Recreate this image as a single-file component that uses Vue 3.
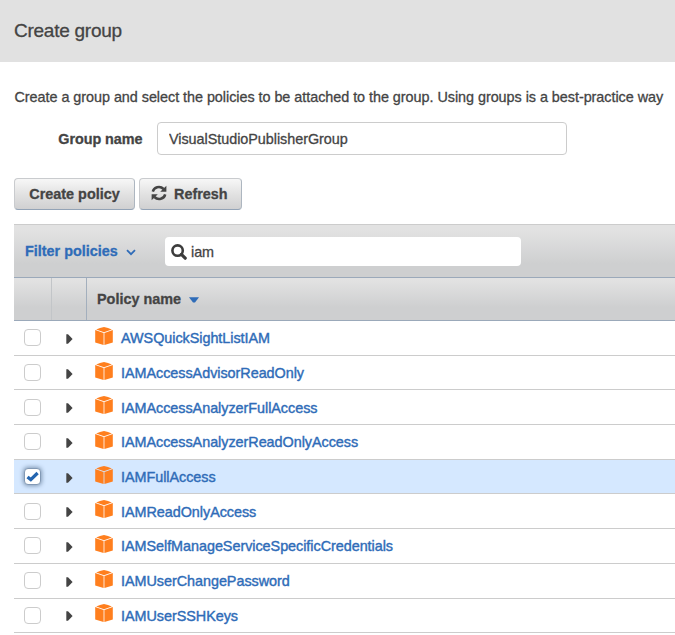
<script setup>
import { ref } from 'vue'

const groupName = ref('VisualStudioPublisherGroup')
const query = ref('iam')
const policies = ref([
  { name: 'AWSQuickSightListIAM', checked: false },
  { name: 'IAMAccessAdvisorReadOnly', checked: false },
  { name: 'IAMAccessAnalyzerFullAccess', checked: false },
  { name: 'IAMAccessAnalyzerReadOnlyAccess', checked: false },
  { name: 'IAMFullAccess', checked: true },
  { name: 'IAMReadOnlyAccess', checked: false },
  { name: 'IAMSelfManageServiceSpecificCredentials', checked: false },
  { name: 'IAMUserChangePassword', checked: false },
  { name: 'IAMUserSSHKeys', checked: false },
])
</script>

<template>
  <div class="page">
    <header class="title-bar"><h1>Create group</h1></header>
    <main class="content">
      <p class="intro">Create a group and select the policies to be attached to the group. Using groups is a best-practice way</p>
      <div class="field">
        <label for="group-name">Group name</label>
        <input id="group-name" v-model="groupName" type="text" />
      </div>
      <div class="actions">
        <button class="btn create">Create policy</button>
        <button class="btn refresh">
          <svg width="16" height="16" viewBox="0 0 16 16">
            <path d="M1.8 6.6C2.8 2.2 8.8.2 12.6 4" fill="none" stroke="#444" stroke-width="2.5" />
            <path d="M15.4.8v6H9.2z" fill="#444" />
            <path d="M14.2 9.4C13.2 13.8 7.2 15.8 3.4 12" fill="none" stroke="#444" stroke-width="2.5" />
            <path d="M.6 15.2v-6h6.2z" fill="#444" />
          </svg>
          <span>Refresh</span>
        </button>
      </div>
      <section class="table">
        <div class="filter-bar">
          <a class="filter">Filter policies</a>
          <svg class="chevron" width="10" height="7" viewBox="0 0 10 7">
            <path d="M1 1.2l4 4 4-4" fill="none" stroke="#2f6cb8" stroke-width="1.8" />
          </svg>
          <div class="search">
            <svg width="16" height="16" viewBox="0 0 16 16">
              <circle cx="6.6" cy="6.6" r="5.2" fill="none" stroke="#3c3c3c" stroke-width="2.6" />
              <path d="M10.4 10.4l3.8 3.8" stroke="#3c3c3c" stroke-width="3.2" stroke-linecap="round" />
            </svg>
            <input v-model="query" type="text" />
          </div>
        </div>
        <div class="head">
          <div class="cell check-col"></div>
          <div class="cell arrow-col"></div>
          <div class="name-head">
            <span>Policy name</span>
            <svg width="10" height="6" viewBox="0 0 10 6"><path d="M0 .3h10L6 5.6H4z" fill="#2f6cb8" /></svg>
          </div>
        </div>
        <div v-for="p in policies" :key="p.name" class="row" :class="{ selected: p.checked }">
          <span class="box" :class="{ on: p.checked }" @click="p.checked = !p.checked">
            <svg v-if="p.checked" width="13" height="11" viewBox="0 0 13 11">
              <path d="M1.5 6l3.3 2.6L11.6 2" fill="none" stroke="#2465b0" stroke-width="3.3" />
            </svg>
          </span>
          <svg class="expand" width="7" height="10" viewBox="0 0 7 10"><path d="M.3.2H2L6.6 5 2 9.8H.3z" fill="#444" /></svg>
          <svg class="cube" width="18" height="18" viewBox="0 0 18 18">
            <path d="M9 0l4 1.1 3.8 1.4L9 5.3 1.2 2.5 5 1.1z" fill="#ff7f1e" />
            <path d="M.2 3.1l8.4 3V18L.2 15.6zM17.8 3.1l-8.4 3V18l8.4-2.4z" fill="#ff7f1e" />
          </svg>
          <a class="name">{{ p.name }}</a>
        </div>
      </section>
    </main>
  </div>
</template>

<style>
body { margin: 0; background: #fff; }
</style>

<style scoped>
.page { width: 675px; height: 635px; overflow: hidden; background: #fff; color: #444; font: 14.4px/20px "Liberation Sans", Arial, sans-serif; -webkit-text-stroke: 0.3px currentColor; }
.title-bar { height: 62px; box-sizing: border-box; background: #e1e1e1; padding: 18px 14px 0; }
h1 { margin: 0; font-size: 19px; font-weight: 400; line-height: 25px; letter-spacing: -0.25px; }
.content { padding: 25px 0 0 14px; }
.intro { margin: 0; padding-left: 0.5px; white-space: nowrap; line-height: 20px; letter-spacing: -0.04px; }
.field { display: flex; align-items: center; margin-top: 15px; height: 33px; }
.field label { width: 128.5px; margin-right: 14.5px; text-align: right; font-weight: 700; letter-spacing: -0.05px; }
input { font: inherit; color: #444; box-sizing: border-box; outline: none; letter-spacing: -0.04px; -webkit-text-stroke: inherit; }
.field input { width: 410px; height: 33px; border: 1px solid #ccc; border-radius: 4px; padding: 0 11px; }
.actions { display: flex; gap: 4px; margin-top: 23px; }
.btn { display: flex; align-items: center; justify-content: center; box-sizing: border-box; height: 32px; padding: 0; border: 1px solid #c9cbce; border-bottom-color: #93a3b6; border-right-color: #adb6c0; border-radius: 4px; background: linear-gradient(#f7f7f7, #e2e2e2 50%, #d0d0d1); color: #444; font: inherit; font-weight: 700; -webkit-text-stroke: inherit; }
.create { width: 121px; }
.refresh { width: 103px; justify-content: flex-start; gap: 7px; padding-left: 11px; }
.refresh svg { margin-top: -2px; }
.table { margin-top: 14px; }
.filter-bar { display: flex; align-items: center; box-sizing: border-box; height: 54px; padding-left: 11px; border-top: 1px solid #ccc; border-bottom: 1px solid #9ba9ba; background: linear-gradient(#e2e2e2 10%, #cecfd0 75%); }
.filter { width: 93px; white-space: nowrap; color: #2f6cb8; font-weight: 700; }
.chevron { margin: 2px 29px 0 8px; }
.search { display: flex; align-items: center; width: 356px; height: 29px; margin-top: 1px; padding-left: 6px; box-sizing: border-box; border-radius: 4px; background: #fff; }
.search input { width: 320px; padding: 0 0 0 4px; border: 0; }
.head { display: flex; box-sizing: border-box; height: 43px; border-bottom: 1px solid #9ba9ba; background: linear-gradient(#e2e2e2 5%, #cecfd0 70%); }
.cell { box-sizing: border-box; }
.check-col { width: 38px; border-right: 1px solid #c2c5c8; }
.arrow-col { width: 35px; border-right: 1px solid #a3afbd; }
.name-head { display: flex; align-items: center; gap: 8px; padding-left: 10px; font-weight: 700; }
.name-head svg { margin-top: 2px; }
.row { display: flex; align-items: center; box-sizing: border-box; height: 34.7px; border-bottom: 1px solid #ccc; }
.selected { background: #d5e8ff; }
.box { display: flex; align-items: center; justify-content: center; box-sizing: border-box; width: 17px; height: 17px; margin-left: 10px; border: 1px solid #ccc; border-radius: 4px; background: #fff; }
.on { border-color: #8299b5; box-shadow: 0 0 4px 1px #8299b5; }
.expand { margin: 2px 0 0 25px; }
.cube { margin: -4px 0 0 22px; }
.name { margin: 1px 0 0 8px; color: #2f6cb8; letter-spacing: -0.04px; -webkit-text-stroke: 0.4px currentColor; }
</style>
